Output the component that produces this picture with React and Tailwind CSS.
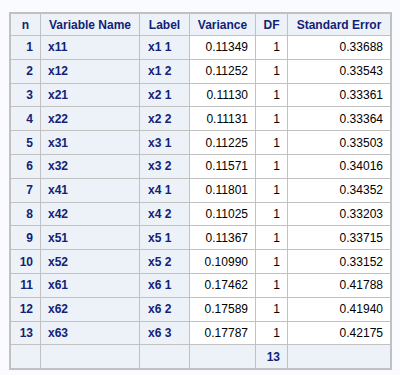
import React from 'react';

const rows = [
  ['1', 'x11', 'x1 1', '0.11349', '1', '0.33688'],
  ['2', 'x12', 'x1 2', '0.11252', '1', '0.33543'],
  ['3', 'x21', 'x2 1', '0.11130', '1', '0.33361'],
  ['4', 'x22', 'x2 2', '0.11131', '1', '0.33364'],
  ['5', 'x31', 'x3 1', '0.11225', '1', '0.33503'],
  ['6', 'x32', 'x3 2', '0.11571', '1', '0.34016'],
  ['7', 'x41', 'x4 1', '0.11801', '1', '0.34352'],
  ['8', 'x42', 'x4 2', '0.11025', '1', '0.33203'],
  ['9', 'x51', 'x5 1', '0.11367', '1', '0.33715'],
  ['10', 'x52', 'x5 2', '0.10990', '1', '0.33152'],
  ['11', 'x61', 'x6 1', '0.17462', '1', '0.41788'],
  ['12', 'x62', 'x6 2', '0.17589', '1', '0.41940'],
  ['13', 'x63', 'x6 3', '0.17787', '1', '0.42175'],
];

const cols = 'grid grid-cols-[30px_99px_50px_66px_32px_102px]';
const headCell =
  'flex items-center justify-center bg-[#edf2f9] font-bold text-[#112277] border-r border-[#c1c1c1]';
const stub = 'flex items-center bg-[#edf2f9] font-bold text-[#112277] border-r border-[#c1c1c1]';
const num = 'flex items-center justify-end pr-[7px] bg-white text-black border-r border-[#c1c1c1]';

export default function App() {
  return (
    <div className="min-h-[375px] w-[400px] bg-[#fafbfe] pt-[12px] pl-[9px] font-['Liberation_Sans',Arial,sans-serif] text-[12px] leading-none">
      <div className="w-fit border-2 border-[#c1c1c1]">
        {/* header */}
        <div className={`${cols} h-[22px] border-b border-[#c1c1c1]`}>
          <div className={headCell}>n</div>
          <div className={headCell}>Variable Name</div>
          <div className={headCell}>Label</div>
          <div className={headCell}>Variance</div>
          <div className={headCell}>DF</div>
          <div className={`${headCell} border-r-0`}>Standard Error</div>
        </div>
        {rows.map((r) => (
          <div key={r[0]} className={`${cols} h-[23.8px] border-b border-[#c1c1c1]`}>
            <div className={`${stub} justify-end pr-[7px]`}>{r[0]}</div>
            <div className={`${stub} pl-[7px]`}>{r[1]}</div>
            <div className={`${stub} pl-[8px]`}>{r[2]}</div>
            <div className={num}>{r[3]}</div>
            <div className={num}>{r[4]}</div>
            <div className={`${num} border-r-0`}>{r[5]}</div>
          </div>
        ))}
        {/* footer */}
        <div className={`${cols} h-[23px]`}>
          <div className={stub}></div>
          <div className={stub}></div>
          <div className={stub}></div>
          <div className={stub}></div>
          <div className={`${stub} justify-end pr-[7px]`}>13</div>
          <div className={`${stub} border-r-0`}></div>
        </div>
      </div>
    </div>
  );
}
